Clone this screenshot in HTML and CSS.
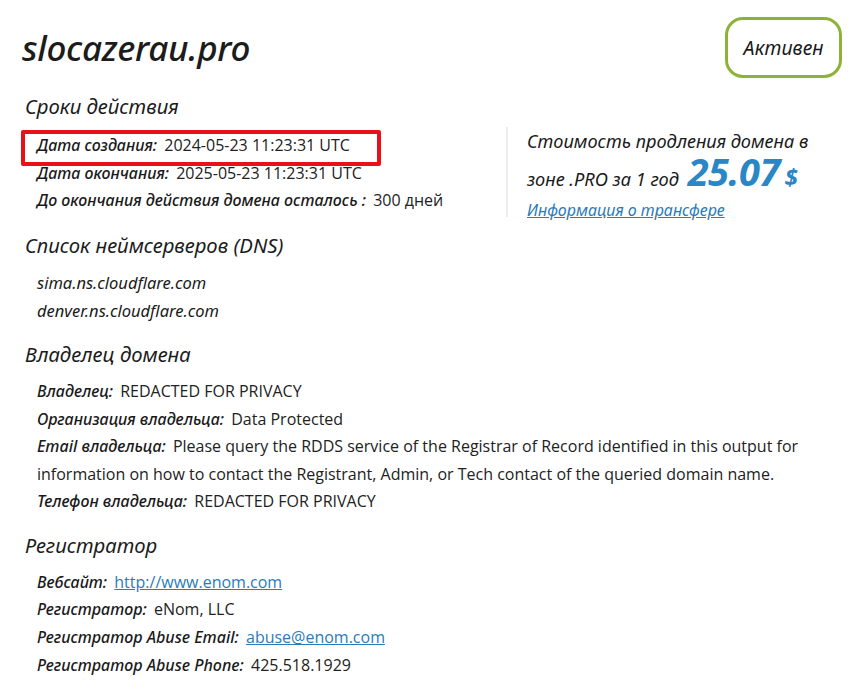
FILE: index.html
```html
<!DOCTYPE html>
<html lang="ru">
<head>
<meta charset="utf-8">
<link rel="stylesheet" href="styles.css">
</head>
<body>
<div class="page">
  <header class="head">
    <h1 class="domain">slocazerau.pro</h1>
    <div class="status">Активен</div>
  </header>

  <h2 class="sec sec-first">Сроки действия</h2>
  <div class="dates">
    <div class="rows">
      <div class="row"><span class="lbl">Дата создания:</span> <span class="val">2024-05-23 11:23:31 UTC</span><span class="mark"></span></div>
      <div class="row"><span class="lbl">Дата окончания:</span> <span class="val">2025-05-23 11:23:31 UTC</span></div>
      <div class="row"><span class="lbl">До окончания действия домена осталось :</span> <span class="val">300 дней</span></div>
    </div>
    <div class="price">
      <div class="p1">Стоимость продления домена в</div>
      <div class="p2">зоне .PRO за 1 год <span class="num">25.07</span> <span class="cur">$</span></div>
      <a class="transfer" href="#">Информация о трансфере</a>
    </div>
  </div>

  <h2 class="sec">Список неймсерверов (DNS)</h2>
  <div class="rows">
    <div class="row ns">sima.ns.cloudflare.com</div>
    <div class="row ns">denver.ns.cloudflare.com</div>
  </div>

  <h2 class="sec">Владелец домена</h2>
  <div class="rows">
    <div class="row"><span class="lbl">Владелец:</span> <span class="val">REDACTED FOR PRIVACY</span></div>
    <div class="row"><span class="lbl">Организация владельца:</span> <span class="val">Data Protected</span></div>
    <div class="row"><span class="lbl">Email владельца:</span> <span class="val">Please query the RDDS service of the Registrar of Record identified in this output for information on how to contact the Registrant, Admin, or Tech contact of the queried domain name.</span></div>
    <div class="row"><span class="lbl">Телефон владельца:</span> <span class="val">REDACTED FOR PRIVACY</span></div>
  </div>

  <h2 class="sec">Регистратор</h2>
  <div class="rows">
    <div class="row reg"><span class="lbl">Вебсайт:</span> <a class="val link" href="#">http://www.enom.com</a></div>
    <div class="row reg"><span class="lbl">Регистратор:</span> <span class="val">eNom, LLC</span></div>
    <div class="row reg"><span class="lbl">Регистратор Abuse Email:</span> <a class="val link" href="#">abuse@enom.com</a></div>
    <div class="row reg"><span class="lbl">Регистратор Abuse Phone:</span> <span class="val">425.518.1929</span></div>
  </div>
</div>
</body>
</html>
```
FILE: styles.css
```css
html, body {
  margin: 0;
  padding: 0;
  background: #fff;
  color: #1a1a1a;
}
.page {
  padding: 17px 25px 0 25px;
  font-family: "Noto Sans", "DejaVu Sans", sans-serif;
}
.head {
  display: flex;
  justify-content: space-between;
  align-items: flex-start;
  height: 75px;
}
.domain {
  margin: 12px 0 0 -3px;
  font-size: 35px;
  font-style: italic;
  font-weight: 500;
  line-height: 38px;
  letter-spacing: -0.3px;
  color: #1c1c1c;
}
.status {
  box-sizing: border-box;
  width: 117px;
  height: 61px;
  border: 3px solid #8cb23a;
  border-radius: 18px;
  display: flex;
  align-items: center;
  justify-content: center;
  font-style: italic;
  font-size: 19.5px;
  color: #1a1a1a;
}
.sec {
  margin: 15px 0 10px 0;
  font-size: 20.3px;
  line-height: 28px;
  font-style: italic;
  font-weight: 400;
  color: #1c1c1c;
}
.sec-first {
  margin-top: 0;
  margin-bottom: 12px;
}
.dates {
  display: flex;
  align-items: flex-start;
  height: 84px;
}
.dates .rows {
  box-sizing: border-box;
  width: 481px;
  flex: none;
}
.rows {
  padding-left: 12px;
}
.row {
  position: relative;
  font-size: 16px;
  line-height: 27.5px;
}
.reg {
  line-height: 27.8px;
}
.lbl {
  font-style: italic;
  font-weight: 500;
  margin-right: 3px;
}
.val {
  font-family: "Open Sans", "Noto Sans", sans-serif;
  font-weight: 400;
  color: #222;
}
.link {
  color: #2b7bb9;
  text-decoration: underline;
}
.ns {
  font-style: italic;
  font-size: 16.5px;
  line-height: 28px;
}
.mark {
  position: absolute;
  left: -16px;
  top: -2px;
  width: 352px;
  height: 28px;
  border: 4px solid #e81119;
  border-radius: 2px;
}
.price {
  flex: none;
  margin-top: -5px;
  height: 90px;
  box-sizing: border-box;
  border-left: 2px solid #eeeeee;
  padding: 0 0 0 19px;
  font-style: italic;
}
.p1 {
  font-size: 18.2px;
  line-height: 28px;
}
.p2 {
  font-size: 18.2px;
  line-height: 32px;
  white-space: nowrap;
}
.num {
  margin-left: 4px;
  font-size: 38px;
  font-weight: 700;
  color: #2b86c5;
  letter-spacing: -0.5px;
}
.cur {
  font-size: 24px;
  font-weight: 700;
  color: #2b86c5;
}
.transfer {
  display: block;
  margin-top: 4px;
  font-size: 16px;
  line-height: 22px;
  color: #2b7bb9;
  text-decoration: underline;
}
```
